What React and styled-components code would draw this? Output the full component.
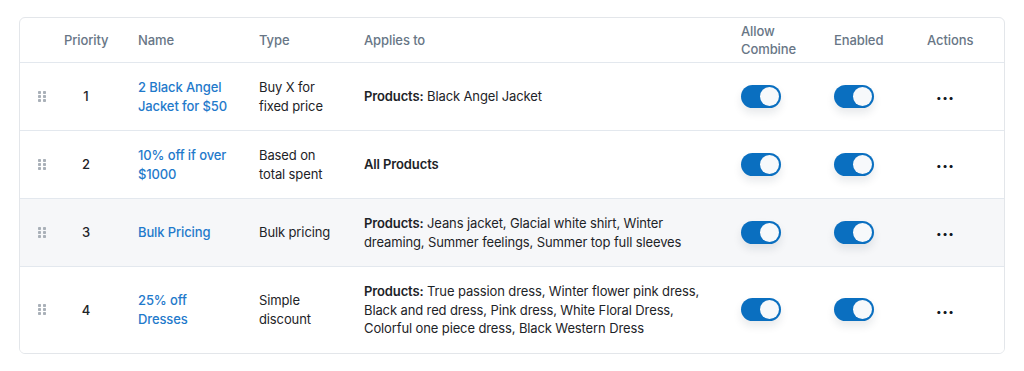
import React, { useState } from 'react';
import styled, { createGlobalStyle } from 'styled-components';

const GlobalStyle = createGlobalStyle`
  body {
    margin: 0;
    background: #ffffff;
    font-family: Inter, "Liberation Sans", sans-serif;
    -webkit-font-smoothing: antialiased;
  }
`;

const rules = [
  {
    id: 1,
    name: '2 Black Angel Jacket for $50',
    type: 'Buy X for fixed price',
    label: 'Products:',
    items: 'Black Angel Jacket',
  },
  {
    id: 2,
    name: '10% off if over $1000',
    type: 'Based on total spent',
    label: 'All Products',
    items: '',
  },
  {
    id: 3,
    name: 'Bulk Pricing',
    type: 'Bulk pricing',
    label: 'Products:',
    items: 'Jeans jacket, Glacial white shirt, Winter dreaming, Summer feelings, Summer top full sleeves',
  },
  {
    id: 4,
    name: '25% off Dresses',
    type: 'Simple discount',
    label: 'Products:',
    items:
      'True passion dress, Winter flower pink dress, Black and red dress, Pink dress, White Floral Dress, Colorful one piece dress, Black Western Dress',
  },
];

const DragHandle = () => (
  <svg width="8" height="11" viewBox="0 0 8 11" aria-hidden="true">
    {[0, 4, 8].map((y) =>
      [0, 5].map((x) => <rect key={`${x}-${y}`} x={x} y={y} width="3" height="3" rx="0.8" fill="#a9b0b8" />)
    )}
  </svg>
);

const Toggle = ({ defaultOn = true }) => {
  const [on, setOn] = useState(defaultOn);
  return (
    <Switch type="button" $on={on} onClick={() => setOn(!on)} aria-pressed={on}>
      <Knob $on={on} />
    </Switch>
  );
};

const App = () => {
  return (
    <>
      <GlobalStyle />
      <Page>
        <Card>
          <HeaderRow>
            <HeadCell />
            <HeadCell>Priority</HeadCell>
            <HeadCell>Name</HeadCell>
            <HeadCell>Type</HeadCell>
            <HeadCell>Applies to</HeadCell>
            <HeadCell>
              Allow
              <br />
              Combine
            </HeadCell>
            <HeadCell>Enabled</HeadCell>
            <HeadCell>Actions</HeadCell>
          </HeaderRow>
          {rules.map((rule) => (
            <Row key={rule.id} $shaded={rule.id === 3}>
              <HandleCell>
                <DragHandle />
              </HandleCell>
              <Cell>
                <PriorityNum>{rule.id}</PriorityNum>
              </Cell>
              <Cell $gap={26}>
                <NameLink href="#">{rule.name}</NameLink>
              </Cell>
              <Cell $gap={30}>{rule.type}</Cell>
              <Cell $gap={36}>
                <strong>{rule.label}</strong>
                {rule.items && ` ${rule.items}`}
              </Cell>
              <Cell>
                <Toggle />
              </Cell>
              <Cell>
                <Toggle />
              </Cell>
              <Cell>
                <MoreButton type="button" aria-label="More actions">
                  •••
                </MoreButton>
              </Cell>
            </Row>
          ))}
        </Card>
      </Page>
    </>
  );
};

export default App;

const columns = '44px 74px 121px 105px 377px 93px 93px 1fr';

const Page = styled.div`
  padding: 17px 19px;
`;

const Card = styled.div`
  width: 986px;
  box-sizing: border-box;
  border: 1px solid #e3e6ea;
  border-radius: 6px;
  overflow: hidden;
  background: #fff;
`;

const HeaderRow = styled.div`
  display: grid;
  grid-template-columns: ${columns};
  align-items: center;
  height: 44px;
  border-bottom: 1px solid #e3e8ee;
`;

const HeadCell = styled.div`
  font-size: 13px;
  line-height: 18px;
  font-weight: 500;
  letter-spacing: -0.1px;
  color: #687686;
`;

const Row = styled.div`
  display: grid;
  grid-template-columns: ${columns};
  align-items: center;
  padding: 15px 0;
  background: ${(p) => (p.$shaded ? '#f6f7f9' : '#fff')};
  border-bottom: 1px solid #e3e8ee;

  &:last-child {
    border-bottom: none;
  }
`;

const Cell = styled.div`
  font-size: 13px;
  line-height: 18.5px;
  letter-spacing: -0.12px;
  color: #1d2327;
  padding-right: ${(p) => p.$gap || 0}px;

  strong {
    font-weight: 600;
  }
`;

const HandleCell = styled.div`
  display: flex;
  justify-content: center;
`;

const PriorityNum = styled.span`
  display: inline-block;
  width: 44px;
  text-align: center;
  font-weight: 500;
`;

const NameLink = styled.a`
  color: #1f7acb;
  font-weight: 500;
  text-decoration: none;
`;

const Switch = styled.button`
  position: relative;
  width: 40px;
  height: 23px;
  padding: 0;
  border: none;
  border-radius: 12px;
  background: ${(p) => (p.$on ? '#0a6fc0' : '#c3c8ce')};
  box-shadow: 0 5px 9px rgba(15, 35, 60, 0.1);
  cursor: pointer;
  display: block;
`;

const Knob = styled.span`
  position: absolute;
  top: 2px;
  left: ${(p) => (p.$on ? '19px' : '2px')};
  width: 19px;
  height: 19px;
  border-radius: 50%;
  background: #f7f9fb;
`;

const MoreButton = styled.button`
  border: none;
  background: none;
  padding: 0 0 0 9px;
  font-size: 10px;
  letter-spacing: 0.5px;
  color: #111820;
  cursor: pointer;
  font-family: inherit;
`;
